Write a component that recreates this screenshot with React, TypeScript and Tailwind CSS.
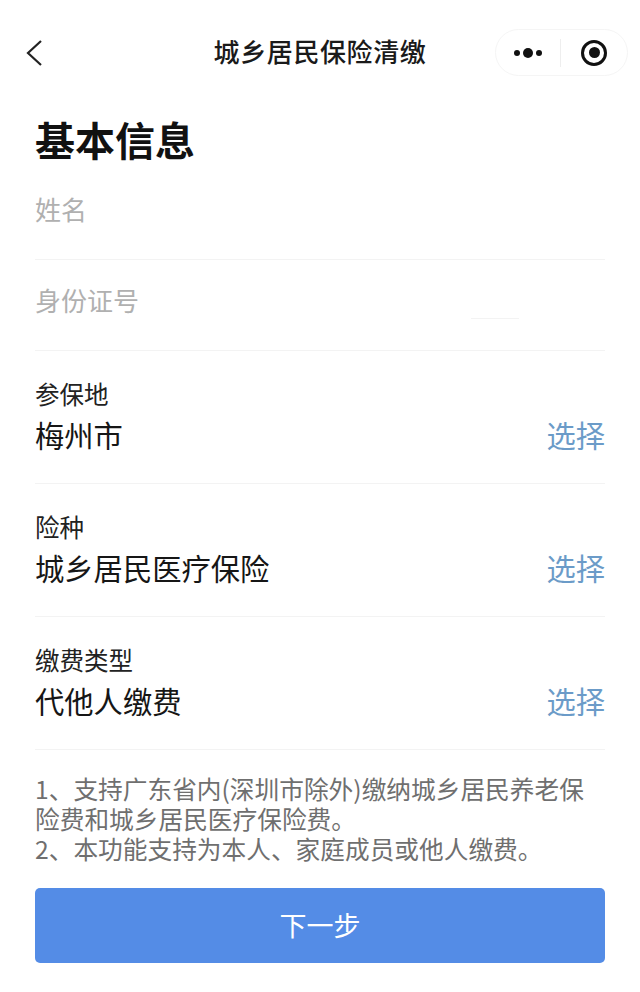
const FONT = "font-['Noto_Sans_CJK_SC','Liberation_Sans',sans-serif]";

function SelectRow({ label, value }: { label: string; value: string }) {
  return (
    <div className="flex h-[133px] flex-col border-b border-[#f3f3f3] pt-[25px]">
      <div className="h-[36px] text-[24.5px] leading-[36px] text-[#222222]">{label}</div>
      <div className="flex h-[44px] items-center justify-between">
        <span className="text-[29.3px] leading-[44px] text-[#161616]">{value}</span>
        <span className="text-[29.3px] leading-[44px] text-[#6b9bc8]">选择</span>
      </div>
    </div>
  );
}

export default function App() {
  return (
    <div className={`${FONT} h-[992px] w-[640px] overflow-hidden bg-white`}>
      <header className="grid h-[76px] grid-cols-[1fr_auto_1fr] items-center pt-[29px]">
        <div className="pl-[24px]">
          <svg width="20" height="28" viewBox="0 0 20 28" fill="none" stroke="#222" strokeWidth="2.2">
            <path d="M17 2 L4 14 L17 26" />
          </svg>
        </div>
        <h2 className="pb-[3px] text-[26px] font-medium leading-[44px] tracking-[0.6px] text-[#1a1a1a]">城乡居民保险清缴</h2>
        <div className="flex justify-end pr-[12px]">
          <div className="flex h-[47px] w-[133px] items-center rounded-full border border-[#f5f5f5] bg-white">
            <div className="flex flex-1 items-center justify-center gap-[3px]">
              <span className="h-[6px] w-[6px] rounded-full bg-[#111]" />
              <span className="h-[10px] w-[10px] rounded-full bg-[#111]" />
              <span className="h-[6px] w-[6px] rounded-full bg-[#111]" />
            </div>
            <div className="h-[28px] w-px bg-[#eeeeee]" />
            <div className="flex w-[66px] items-center justify-center">
              <div className="flex h-[26px] w-[26px] items-center justify-center rounded-full border-[3px] border-[#111]">
                <span className="h-[11px] w-[11px] rounded-full bg-[#111]" />
              </div>
            </div>
          </div>
        </div>
      </header>

      <main className="px-[35px]">
        <h1 className="mt-[39px] text-[40px] font-bold leading-[48px] text-[#111]">基本信息</h1>

        <div className="mb-0 h-[97px] border-b border-[#f3f3f3] pt-[27px] text-[26px] leading-[38px] text-[#b0b0b0]">姓名</div>
        <div className="relative h-[91px] border-b border-[#f3f3f3] pt-[21px] text-[26px] leading-[38px] text-[#b0b0b0]">
          身份证号
          <span className="absolute left-[436px] top-[58px] h-px w-[48px] bg-[#f3f3f3]" />
        </div>

        <SelectRow label="参保地" value="梅州市" />
        <SelectRow label="险种" value="城乡居民医疗保险" />
        <SelectRow label="缴费类型" value="代他人缴费" />

        <p className="mt-[23px] text-[24.7px] leading-[30px] text-[#6f6f6f]">
          1、支持广东省内(深圳市除外)缴纳城乡居民养老保
          <br />
          险费和城乡居民医疗保险费。
          <br />
          2、本功能支持为本人、家庭成员或他人缴费。
        </p>

        <button className="mt-[25px] flex h-[75px] w-[570px] items-center justify-center rounded-[5px] bg-[#548ce6] text-[27px] text-white">
          下一步
        </button>
      </main>
    </div>
  );
}
